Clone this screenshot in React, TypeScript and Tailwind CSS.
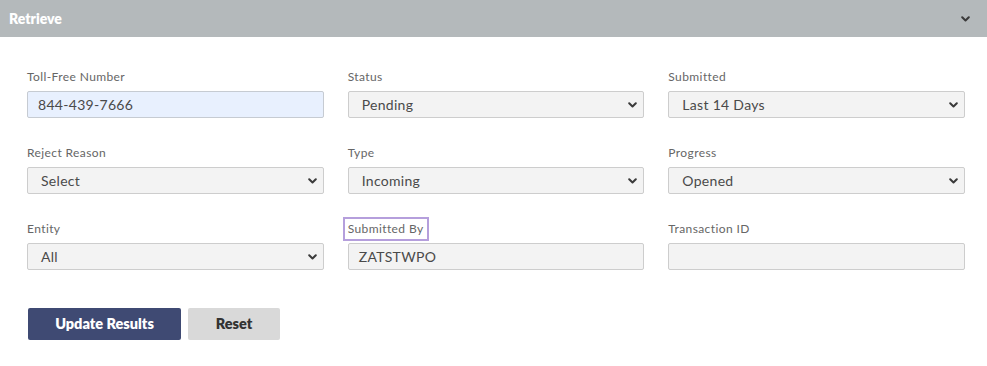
import React from "react";

const Chevron = ({ className = "" }: { className?: string }) => (
  <svg width="9" height="6" viewBox="0 0 9 6" className={className}>
    <path d="M1.2 1.2 L4.5 4.5 L7.8 1.2" fill="none" stroke="#3a3a3a" strokeWidth="2" strokeLinecap="round" strokeLinejoin="round" />
  </svg>
);

type Field = {
  label: string;
  value: string;
  kind: "input" | "select";
  autofill?: boolean;
  highlight?: boolean;
};

const fields: Field[] = [
  { label: "Toll-Free Number", value: "844-439-7666", kind: "input", autofill: true },
  { label: "Status", value: "Pending", kind: "select" },
  { label: "Submitted", value: "Last 14 Days", kind: "select" },
  { label: "Reject Reason", value: "Select", kind: "select" },
  { label: "Type", value: "Incoming", kind: "select" },
  { label: "Progress", value: "Opened", kind: "select" },
  { label: "Entity", value: "All", kind: "select" },
  { label: "Submitted By", value: "ZATSTWPO", kind: "input", highlight: true },
  { label: "Transaction ID", value: "", kind: "input" },
];

function FieldBox({ f }: { f: Field }) {
  return (
    <div className="flex flex-col">
      <div className="h-[19px] flex items-center">
        <span
          className={
            "text-[12px] leading-[14px] text-[#666] tracking-[0.4px] " +
            (f.highlight ? "outline-2 outline-[#b59fdc] outline-offset-[3px]" : "")
          }
        >
          {f.label}
        </span>
      </div>
      <div
        className={
          "mt-[5px] h-[27px] flex items-center justify-between border rounded-[2px] " +
          (f.autofill
            ? "bg-[#e8f0fe] border-[#c6cbd2] pl-[10px]"
            : f.kind === "select"
            ? "bg-[#f3f3f3] border-[#cdcdcd] pl-[13px] pr-[6px]"
            : "bg-[#f3f3f3] border-[#cdcdcd] pl-[10px]")
        }
      >
        <span className="text-[14px] text-[#4a4a4a] tracking-[0.3px]">{f.value}</span>
        {f.kind === "select" && <Chevron />}
      </div>
    </div>
  );
}

export default function App() {
  return (
    <div className="w-[987px] h-[366px] bg-white" style={{ fontFamily: "Lato, 'Open Sans', sans-serif" }}>
      <div className="h-[37px] bg-[#b4b9bb] flex items-center justify-between pl-[9px] pr-[17px]">
        <span className="text-white font-extrabold text-[14px]">Retrieve</span>
        <Chevron />
      </div>
      <div className="pl-[27px] pr-[22px] pt-[30px]">
        <div className="grid grid-cols-3 gap-x-[24px] gap-y-[25px]">
          {fields.map((f) => (
            <FieldBox key={f.label} f={f} />
          ))}
        </div>
        <div className="flex gap-[7px] mt-[38px] pl-[1px]">
          <button className="w-[153px] h-[32px] bg-[#3f4a73] text-white font-extrabold text-[14.5px] rounded-[2px]">
            Update Results
          </button>
          <button className="w-[92px] h-[32px] bg-[#d9d9d9] text-[#333] font-extrabold text-[14.5px] rounded-[2px]">
            Reset
          </button>
        </div>
      </div>
    </div>
  );
}
